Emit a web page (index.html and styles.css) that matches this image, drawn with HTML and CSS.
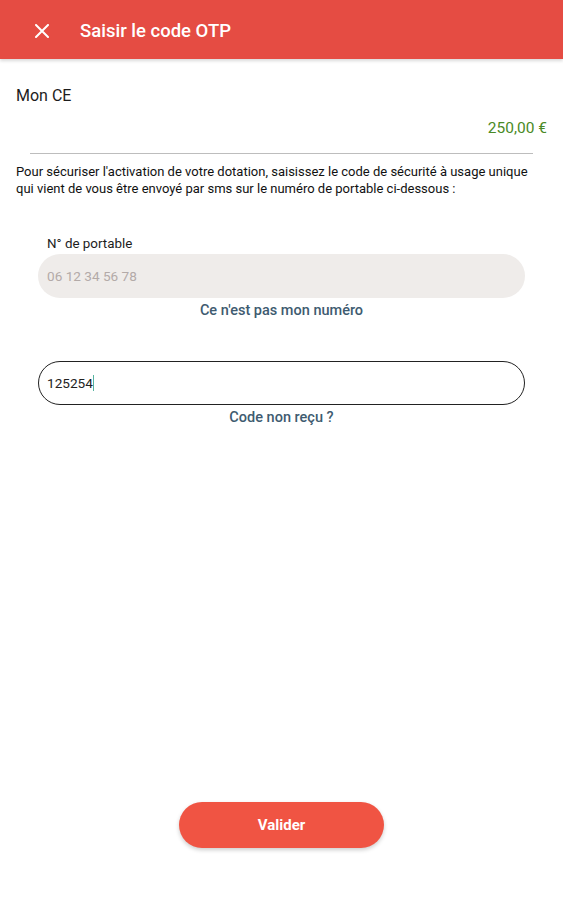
FILE: index.html
```html
<!DOCTYPE html>
<html lang="fr">
<head>
  <meta charset="UTF-8">
  <meta name="viewport" content="width=device-width, initial-scale=1.0">
  <title>Saisir le code OTP</title>
  <link rel="stylesheet" href="styles.css">
</head>
<body>
  <div class="page">
    <div class="topbar">
      <span class="close">
        <svg width="14" height="14" viewBox="0 0 14 14"><path d="M1 1L13 13M13 1L1 13" stroke="#fff" stroke-width="2" stroke-linecap="round"/></svg>
      </span>
      <h1>Saisir le code OTP</h1>
    </div>
    <div class="content">
      <div class="dotation">
        <div class="nom">Mon CE</div>
        <div class="montant">250,00 €</div>
      </div>
      <hr class="sep">
      <p class="intro">Pour sécuriser l'activation de votre dotation, saisissez le code de sécurité à usage unique qui vient de vous être envoyé par sms sur le numéro de portable ci-dessous :</p>
      <div class="form">
        <label>N° de portable</label>
        <div class="field field-grey">06 12 34 56 78</div>
        <a class="lien">Ce n'est pas mon numéro</a>
        <div class="field field-otp">125254<span class="caret"></span></div>
        <a class="lien">Code non reçu ?</a>
      </div>
    </div>
    <div class="footer">
      <button class="btn">Valider</button>
    </div>
  </div>
</body>
</html>
```
FILE: styles.css
```css
* { box-sizing: border-box; margin: 0; padding: 0; }
html, body { height: 100%; }
body {
  font-family: Roboto, "Noto Sans", Arial, sans-serif;
  background-color: #fff;
  color: #1c1c1c;
}
.page {
  height: 900px;
  display: flex;
  flex-direction: column;
}
.topbar {
  height: 59px;
  background-color: #e54c43;
  display: flex;
  align-items: center;
  padding-left: 35px;
  box-shadow: 0 2px 3px rgba(0,0,0,0.15);
}
.close { display: flex; width: 14px; height: 14px; margin-top: 2px; }
.topbar h1 {
  color: #fff;
  font-size: 18.5px;
  font-weight: 500;
  margin-left: 31px;
  margin-top: 2px;
}
.content {
  flex: 1;
  padding: 0 16px;
}
.dotation { padding-top: 27px; }
.nom { font-size: 16px; line-height: 20px; }
.montant {
  text-align: right;
  color: #4a8a25;
  font-size: 15.5px;
  line-height: 20px;
  margin-top: 12px;
}
.sep {
  border: none;
  border-top: 1px solid #bdbdbd;
  margin: 15px 14px 0 14px;
}
.intro {
  font-size: 13px;
  line-height: 17px;
  margin-top: 9px;
  color: #111;
}
.form {
  margin: 39px 22px 0 22px;
  display: flex;
  flex-direction: column;
}
.form label {
  font-size: 13.4px;
  padding-left: 9px;
  line-height: 16px;
  margin-bottom: 2px;
}
.field {
  height: 44px;
  border-radius: 22px;
  display: flex;
  align-items: center;
  padding-left: 9px;
  font-size: 13.6px;
}
.field-grey {
  background-color: #efecea;
  color: #b3aaa8;
}
.field-otp {
  margin-top: 41px;
  border: 1.5px solid #222;
  color: #222;
  padding-left: 8px;
}
.caret {
  display: inline-block;
  width: 1px;
  height: 16px;
  background-color: #56b3a0;
}
.lien {
  text-align: center;
  color: #3e5b70;
  font-size: 14.5px;
  font-weight: 500;
  margin-top: 4px;
  line-height: 18px;
}
.footer {
  display: flex;
  justify-content: center;
  padding-bottom: 52px;
}
.btn {
  width: 205px;
  height: 46px;
  border: none;
  border-radius: 23px;
  background-color: #f05443;
  color: #fff;
  font-family: Roboto, Arial, sans-serif;
  font-size: 15px;
  font-weight: 700;
  box-shadow: 0 2px 4px rgba(0,0,0,0.2);
}
```
